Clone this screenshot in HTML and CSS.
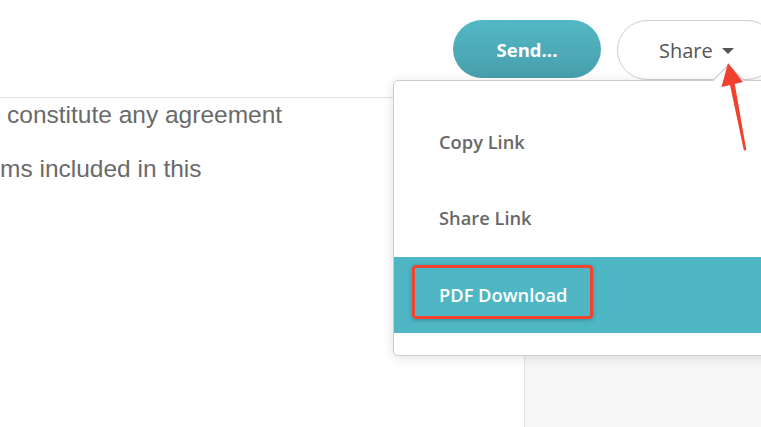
FILE: index.html
```html
<!DOCTYPE html>
<html lang="en">
<head>
<meta charset="utf-8">
<title>Share menu</title>
<link rel="stylesheet" href="styles.css">
</head>
<body>
<div class="page">
  <header class="topbar">
    <button class="btn btn-send">Send...</button>
    <button class="btn btn-share">Share <span class="caret"></span></button>
  </header>
  <main class="content">
    <section class="doc">
      <p class="line line-first">constitute any agreement</p>
      <p class="line">ms included in this</p>
    </section>
    <aside class="sidebar"></aside>
  </main>

  <div class="dropdown">
    <ul class="menu">
      <li class="item">Copy Link</li>
      <li class="item">Share Link</li>
      <li class="item item-active"><span class="label">PDF Download</span><span class="annot"></span></li>
    </ul>
  </div>

  <svg class="pointer" width="40" height="100" viewBox="0 0 40 100">
    <path d="M8 3 L1.5 27 L23 22 Z" fill="#f2402f"/>
    <path d="M9.8 24 L14.6 23 L26.3 90 L23.9 90.4 Z" fill="#f2402f"/>
  </svg>
</div>
</body>
</html>
```
FILE: styles.css
```css
* { box-sizing: border-box; }
html, body { margin: 0; padding: 0; }
body {
  width: 761px;
  height: 427px;
  overflow: hidden;
  background: #fff;
  font-family: "Open Sans", "Liberation Sans", sans-serif;
}
.page {
  position: relative;
  width: 761px;
  height: 427px;
  overflow: hidden;
}
.topbar {
  height: 98px;
  border-bottom: 1px solid #dedede;
  display: flex;
  justify-content: flex-end;
  align-items: flex-start;
  gap: 16px;
  padding-top: 20px;
}
.btn {
  font-family: "Open Sans", "Liberation Sans", sans-serif;
  border-radius: 30px;
  cursor: pointer;
  display: flex;
  align-items: center;
  justify-content: center;
}
.btn-send {
  width: 148px;
  height: 58px;
  border: none;
  background: linear-gradient(#53b8c5, #479fab);
  color: #fff;
  font-weight: 700;
  font-size: 18.5px;
}
.btn-share {
  width: 160px;
  height: 60px;
  margin-right: -16px;
  background: #fff;
  border: 1px solid #cfcfcf;
  color: #555;
  font-size: 20px;
  font-weight: 400;
  justify-content: flex-start;
  padding-left: 41px;
  gap: 9px;
}
.caret {
  width: 0;
  height: 0;
  border-left: 6px solid transparent;
  border-right: 6px solid transparent;
  border-top: 6px solid #555;
  margin-top: 2px;
}
.content {
  display: grid;
  grid-template-columns: 524px 1fr;
  height: 329px;
}
.doc {
  padding-top: 2px;
}
.line {
  margin: 0 0 24px 0;
  font-family: "Liberation Sans", Arial, sans-serif;
  font-size: 24.5px;
  line-height: 30px;
  color: #6a6a6a;
  white-space: nowrap;
}
.line-first { padding-left: 7px; }
.sidebar {
  background: #f6f6f6;
  border-left: 1px solid #e2e2e2;
}
.dropdown {
  position: absolute;
  left: 393px;
  top: 80px;
  width: 420px;
  height: 276px;
  background: #fff;
  border: 1px solid #cccccc;
  border-radius: 5px;
  box-shadow: 0 2px 12px rgba(0, 0, 0, 0.12);
  padding: 24px 0 21px;
}
.dropdown::before {
  content: "";
  position: absolute;
  top: -12px;
  left: 323px;
  width: 22px;
  height: 22px;
  background: #fff;
  border-top: 1px solid #c4c4c4;
  border-left: 1px solid #c4c4c4;
  transform: rotate(45deg);
}
.menu {
  list-style: none;
  margin: 0;
  padding: 0;
}
.item {
  position: relative;
  height: 76px;
  display: flex;
  align-items: center;
  padding-left: 45px;
  padding-bottom: 4px;
  font-size: 18.3px;
  font-weight: 600;
  color: #686868;
}
.item-active {
  background: #4fb6c4;
  color: #fff;
  padding-bottom: 2px;
}
.annot {
  position: absolute;
  left: 18px;
  top: 8px;
  width: 181px;
  height: 54px;
  border: 3px solid #f2432f;
  border-radius: 4px;
  box-shadow: 0 1px 4px rgba(0, 0, 0, 0.25);
}
.pointer {
  position: absolute;
  left: 720px;
  top: 60px;
}
```
